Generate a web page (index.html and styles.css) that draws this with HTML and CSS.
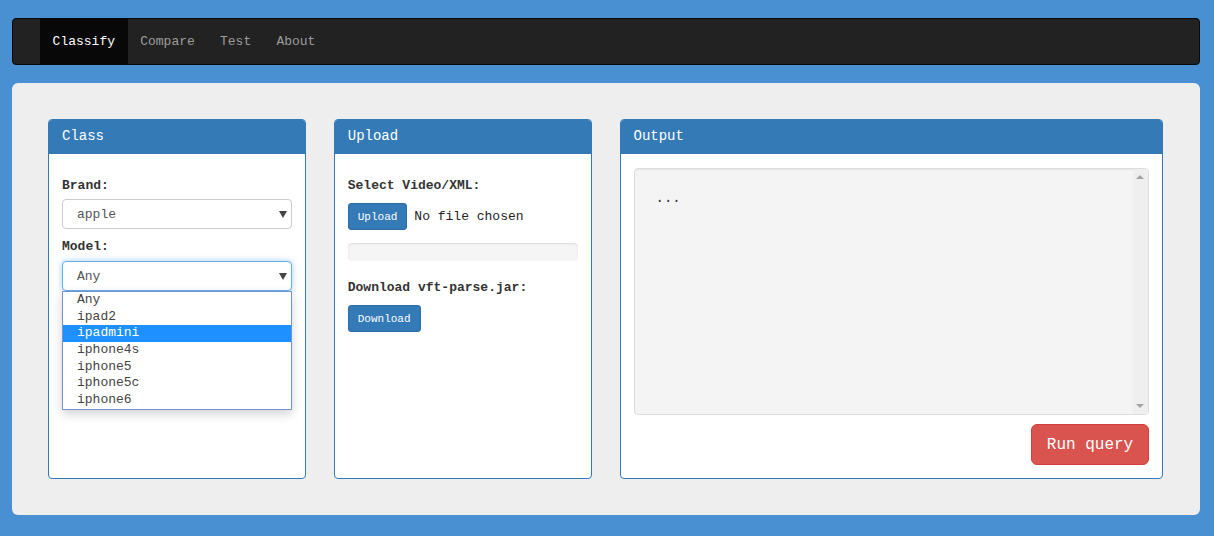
FILE: index.html
```html
<!DOCTYPE html>
<html>
<head>
<meta charset="utf-8">
<link rel="stylesheet" href="styles.css">
</head>
<body>
<nav class="navbar">
  <ul class="nav">
    <li class="nav-item active">Classify</li>
    <li class="nav-item">Compare</li>
    <li class="nav-item">Test</li>
    <li class="nav-item">About</li>
  </ul>
</nav>
<main class="container">
  <section class="panel">
    <div class="panel-heading">Class</div>
    <div class="panel-body">
      <label class="field-label">Brand:</label>
      <div class="select">
        <span>apple</span><span class="caret"></span>
      </div>
      <label class="field-label model-label">Model:</label>
      <div class="select-wrap">
        <div class="select focused">
          <span>Any</span><span class="caret"></span>
        </div>
        <ul class="dropdown">
          <li>Any</li>
          <li>ipad2</li>
          <li class="hl">ipadmini</li>
          <li>iphone4s</li>
          <li>iphone5</li>
          <li>iphone5c</li>
          <li>iphone6</li>
        </ul>
      </div>
    </div>
  </section>
  <section class="panel">
    <div class="panel-heading">Upload</div>
    <div class="panel-body">
      <label class="field-label">Select Video/XML:</label>
      <div class="file-row">
        <button class="btn btn-sm">Upload</button>
        <span class="file-name">No file chosen</span>
      </div>
      <div class="progress"></div>
      <label class="field-label dl-label">Download vft-parse.jar:</label>
      <button class="btn btn-sm dl-btn">Download</button>
    </div>
  </section>
  <section class="panel">
    <div class="panel-heading">Output</div>
    <div class="panel-body output-body">
      <div class="output-box">
        <div class="output-text">...</div>
        <div class="scrollbar">
          <span class="arrow up"></span>
          <span class="arrow down"></span>
        </div>
      </div>
      <div class="actions">
        <button class="btn-run">Run query</button>
      </div>
    </div>
  </section>
</main>
</body>
</html>
```

FILE: styles.css
```css
* { box-sizing: border-box; }
html, body { margin: 0; }
body {
  background: #4890d2;
  padding: 18px 14px 20px 12px;
  font-family: "Liberation Mono", "DejaVu Sans Mono", monospace;
  font-size: 13px;
  color: #333;
  height: 536px;
  overflow: hidden;
}
.navbar {
  height: 47px;
  background: #222;
  border: 1px solid #080808;
  border-radius: 4px;
  padding-left: 27px;
}
.nav {
  list-style: none;
  margin: 0;
  padding: 0;
  display: flex;
  height: 100%;
}
.nav-item {
  padding: 0 12.6px;
  display: flex;
  align-items: center;
  color: #9d9d9d;
  font-size: 13px;
}
.nav-item.active {
  background: #080808;
  color: #fff;
}
.container {
  margin-top: 18px;
  background: #eee;
  border-radius: 6px;
  padding: 36px 37px 36px 36px;
  display: grid;
  grid-template-columns: calc(25% - 21px) calc(25% - 21px) calc(50% - 14px);
  column-gap: 28px;
}
.panel {
  background: #fff;
  border: 1px solid #337ab7;
  border-radius: 4px;
  height: 360px;
  display: flex;
  flex-direction: column;
}
.panel-heading {
  background: #337ab7;
  color: #fff;
  height: 34px;
  padding: 0 13px 2px;
  display: flex;
  align-items: center;
  font-size: 14px;
  border-radius: 3px 3px 0 0;
}
.panel-body {
  padding: 23px 13px 13px;
  flex: 1;
  display: flex;
  flex-direction: column;
  align-items: stretch;
}
.field-label {
  display: block;
  font-weight: bold;
  line-height: 18px;
  margin-bottom: 4px;
}
.model-label { margin-top: 9px; margin-bottom: 5px; }
.select-wrap { position: relative; }
.select {
  height: 30px;
  border: 1px solid #ccc;
  border-radius: 4px;
  padding: 0 4px 0 14px;
  display: flex;
  align-items: center;
  justify-content: space-between;
  color: #555;
  background: #fff;
}
.select.focused {
  border-color: #66afe9;
  box-shadow: 0 0 6px rgba(102, 175, 233, 0.6);
}
.caret {
  width: 0;
  height: 0;
  border-left: 4px solid transparent;
  border-right: 4px solid transparent;
  border-top: 7px solid #444;
  margin-top: 1px;
}
.dropdown {
  position: absolute;
  left: 0;
  right: 0;
  top: 30px;
  margin: 0;
  padding: 0;
  list-style: none;
  background: #fff;
  border: 1px solid #6f94d0;
  box-shadow: 0 4px 10px rgba(0, 0, 0, 0.18);
  z-index: 2;
}
.dropdown li {
  height: 16.7px;
  line-height: 16.7px;
  padding-left: 14px;
  color: #444;
}
.dropdown li.hl {
  background: #1e90ff;
  color: #fff;
}
.file-row {
  display: flex;
  align-items: center;
  margin-top: 4px;
}
.btn {
  font-family: inherit;
  background: #337ab7;
  border: 1px solid #2e6da4;
  color: #fff;
  border-radius: 3px;
  font-size: 11px;
  height: 27px;
  padding: 0 9px;
  cursor: pointer;
}
.file-name {
  margin-left: 7px;
  color: #222;
}
.progress {
  height: 18px;
  margin-top: 13px;
  background: #f5f5f5;
  border-radius: 4px;
  box-shadow: inset 0 1px 2px rgba(0, 0, 0, 0.1);
}
.dl-label { margin-top: 18px; margin-bottom: 8px; }
.dl-btn { align-self: flex-start; }
.output-body { padding-top: 14px; }
.output-box {
  height: 247px;
  background: #f4f4f4;
  border: 1px solid #dcdcdc;
  border-radius: 4px;
  box-shadow: inset 0 1px 1px rgba(0, 0, 0, 0.06);
  display: flex;
}
.output-text {
  flex: 1;
  padding: 19px 21px;
  font-size: 14px;
  line-height: 20px;
  color: #333;
}
.scrollbar {
  width: 15px;
  background: #efefef;
  position: relative;
}
.arrow {
  position: absolute;
  left: 3px;
  width: 0;
  height: 0;
  border-left: 4px solid transparent;
  border-right: 4px solid transparent;
}
.arrow.up { top: 6px; border-bottom: 4px solid #a3a3a3; }
.arrow.down { bottom: 6px; border-top: 4px solid #a3a3a3; }
.actions {
  display: flex;
  justify-content: flex-end;
  margin-top: 9px;
}
.btn-run {
  font-family: inherit;
  font-size: 16px;
  background: #d9534f;
  border: 1px solid #d43f3a;
  color: #fff;
  border-radius: 6px;
  height: 41px;
  width: 118px;
  padding: 0;
  cursor: pointer;
}
```
